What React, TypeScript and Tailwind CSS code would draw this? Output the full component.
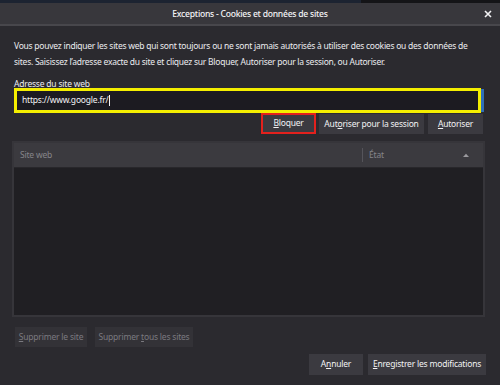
import React from "react";

const font = { fontFamily: "'Noto Sans', 'Open Sans', sans-serif" };

function Btn({
  children,
  className = "",
  disabled = false,
}: {
  children: React.ReactNode;
  className?: string;
  disabled?: boolean;
}) {
  const colors = disabled
    ? "bg-[#333237] text-[#7b7a80]"
    : "bg-[#3b3a40] text-[#f2f2f4]";
  return (
    <div
      className={`flex items-center justify-center whitespace-nowrap text-[8.5px] tracking-[-0.2px] leading-none ${colors} ${className}`}
    >
      <span>{children}</span>
    </div>
  );
}

export default function App() {
  return (
    <div
      className="w-[500px] h-[385px] bg-[#2b2a2f] flex flex-col overflow-hidden"
      style={font}
    >
      {/* bande du haut */}
      <div className="flex h-[3px]">
        <div className="w-[361px] bg-[#1c2331]" />
        <div className="flex-1 bg-[#141417]" />
      </div>

      {/* barre de titre */}
      <div className="grid grid-cols-[1fr_auto_1fr] items-center h-[21px] bg-[#38373c]">
        <div />
        <div className="text-[8.6px] tracking-[-0.25px] font-medium text-[#f4f4f6] pt-[1px] whitespace-nowrap">
          Exceptions - Cookies et données de sites
        </div>
        <div className="flex justify-end pr-[8px]">
          <svg width="8" height="8" viewBox="0 0 8 8">
            <path d="M1 1L7 7M7 1L1 7" stroke="#f2f2f4" strokeWidth="1.6" />
          </svg>
        </div>
      </div>
      <div className="h-[2px] bg-[#48474c]" />

      {/* contenu */}
      <div className="flex flex-col flex-1 pl-[14px] pr-[16px] pt-[12px]">
        <p className="text-[8.5px] tracking-[-0.25px] leading-[16px] text-[#ececef] pr-[8px]">
          Vous pouvez indiquer les sites web qui sont toujours ou ne sont jamais autorisés à utiliser des cookies ou des données de sites. Saisissez l’adresse exacte du site et cliquez sur Bloquer, Autoriser pour la session, ou Autoriser.
        </p>

        <div className="mt-[9px] text-[8.5px] tracking-[-0.2px] leading-[9px] h-[9px] text-[#ececef]">
          A<span className="underline">d</span>resse du site web
        </div>

        <div className="flex h-[25px]">
          <div className="flex-1 flex items-center border-[3px] border-[#f4ee00] bg-[#1c1b21] pl-[5px]">
            <span className="text-[8.5px] tracking-[-0.2px] text-[#f4f4f6]">https://www.google.fr/</span>
            <span className="ml-[1px] w-[1px] h-[11px] bg-[#f4f4f6]" />
          </div>
          <div className="w-[3px] my-[1px] bg-[#2f6fb7]" />
        </div>

        <div className="flex justify-end gap-[3px] pr-[1px]">
          <Btn className="w-[55px] h-[21px] border-2 border-[#e3211d]">
            <span className="underline">B</span>loquer
          </Btn>
          <Btn className="w-[105px] h-[20px] mt-[1px]">
            Aut<span className="underline">o</span>riser pour la session
          </Btn>
          <Btn className="w-[55px] h-[20px] mt-[1px] ml-[1px]">
            <span className="underline">A</span>utoriser
          </Btn>
        </div>

        {/* tableau */}
        <div className="mt-[7px] h-[176px] flex flex-col border-2 border-[#36353a] -ml-[2px] -mr-[1px]">
          <div className="flex items-center h-[24px] bg-[#3b3a3f] text-[8.5px] tracking-[-0.2px] text-[#86858a]">
            <div className="flex-1 pl-[6px]">Site web</div>
            <div className="w-[1px] h-[14px] bg-[#55545a]" />
            <div className="w-[120px] flex items-center justify-between pl-[6px] pr-[14px]">
              <span>État</span>
              <svg width="6" height="4" viewBox="0 0 6 4">
                <path d="M0 4L3 0.8L6 4Z" fill="#9a999e" />
              </svg>
            </div>
          </div>
          <div className="h-[1px] bg-[#28272b]" />
          <div className="flex-1 bg-[#201f23]" />
        </div>

        <div className="flex gap-[8px] mt-[10px] pl-[1px]">
          <Btn disabled className="w-[72px] h-[20px]">
            <span className="underline">S</span>upprimer le site
          </Btn>
          <Btn disabled className="w-[98px] h-[20px]">
            Supprimer <span className="underline">t</span>ous les sites
          </Btn>
        </div>

        <div className="flex justify-end gap-[5px] mt-[7px] -mr-[2px]">
          <Btn className="w-[54px] h-[21px]">
            A<span className="underline">n</span>nuler
          </Btn>
          <Btn className="w-[118px] h-[21px]">
            <span className="underline">E</span>nregistrer les modifications
          </Btn>
        </div>
      </div>
    </div>
  );
}
